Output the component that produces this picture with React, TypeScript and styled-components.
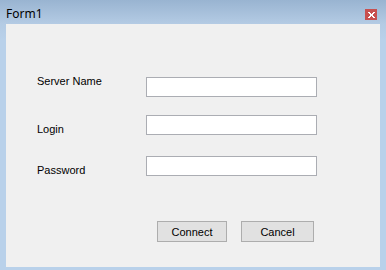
import React, { FC } from "react";
import styled, { createGlobalStyle } from "styled-components";

const Global = createGlobalStyle`
    html, body {
        margin: 0;
        padding: 0;
    }
    body {
        width: 386px;
        height: 270px;
        overflow: hidden;
    }
`

const Window = styled.div`
    width: 386px;
    height: 270px;
    display: flex;
    flex-direction: column;
    background: linear-gradient(to bottom, #99b4d1 0px, #b4cbe4 24px, #b9d1ea 40px, #b9d1ea 100%);
    box-sizing: border-box;
`

const TitleBar = styled.div`
    height: 24px;
    display: flex;
    align-items: flex-start;
    justify-content: space-between;
    padding: 0 9px 0 6px;
    box-sizing: border-box;
`

const Title = styled.span`
    font-family: "Noto Sans", "Open Sans", sans-serif;
    font-size: 12px;
    line-height: 14px;
    margin-top: 7px;
    color: #000;
`

const CloseButton = styled.div`
    width: 12px;
    height: 11px;
    margin-top: 9px;
    background: #c75050;
    display: flex;
    align-items: center;
    justify-content: center;
`

const Client = styled.div`
    flex: 1;
    margin: 0 6px 3px 6px;
    background: #f0f0f0;
    display: flex;
    flex-direction: column;
    padding-left: 31px;
    font-family: "Liberation Sans", Arial, sans-serif;
    font-size: 11px;
    color: #000;
`

const Row = styled.div<{ $top: number }>`
    display: grid;
    grid-template-columns: 109px 171px;
    grid-template-rows: 20px;
    height: 20px;
    align-items: start;
    margin-top: ${p => p.$top}px;
`

const Label = styled.label<{ $shift: number }>`
    line-height: 13px;
    margin-top: ${p => p.$shift}px;
`

const TextBox = styled.input`
    width: 171px;
    height: 20px;
    box-sizing: border-box;
    border: 1px solid #abadb3;
    background: #fff;
    margin: 0;
    padding: 0 2px;
    outline: none;
    font: inherit;
`

const ButtonRow = styled.div`
    display: flex;
    gap: 14px;
    margin-top: 45px;
    padding-left: 120px;
`

const Button = styled.button<{ $width: number }>`
    width: ${p => p.$width}px;
    height: 21px;
    box-sizing: border-box;
    border: 1px solid #adadad;
    background: #e1e1e1;
    font-family: "Liberation Sans", Arial, sans-serif;
    font-size: 11px;
    color: #000;
    padding: 0;
    margin: 0;
`

const App: FC = () => {
    return (
        <>
            <Global />
            <Window>
                <TitleBar>
                    <Title>Form1</Title>
                    <CloseButton>
                        <svg width="7" height="6" viewBox="0 0 7 6">
                            <path d="M0 0h2v1h1v1h1V1h1V0h2v1H6v1H5v2h1v1h1v1H5V5H4V4H3v1H2v1H0V5h1V4h1V2H1V1H0z" fill="#fff" />
                        </svg>
                    </CloseButton>
                </TitleBar>
                <Client>
                    <Row $top={53}>
                        <Label $shift={-2}>Server Name</Label>
                        <TextBox />
                    </Row>
                    <Row $top={18}>
                        <Label $shift={8}>Login</Label>
                        <TextBox />
                    </Row>
                    <Row $top={21}>
                        <Label $shift={8}>Password</Label>
                        <TextBox />
                    </Row>
                    <ButtonRow>
                        <Button $width={70}>Connect</Button>
                        <Button $width={73}>Cancel</Button>
                    </ButtonRow>
                </Client>
            </Window>
        </>
    )
}

export default App
